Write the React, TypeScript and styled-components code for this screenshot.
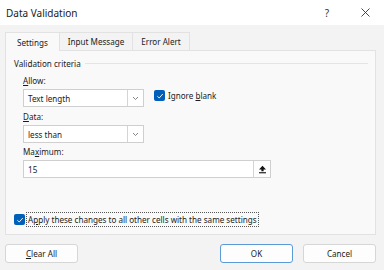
import styled, { createGlobalStyle } from "styled-components";

const GlobalStyle = createGlobalStyle`
  html, body {
    margin: 0;
    background: #f3f3f3;
    font-family: "Noto Sans", "Open Sans", sans-serif;
    color: #1b1b1b;
  }
`;

const Dialog = styled.div`
  width: 384px;
  height: 270px;
  display: flex;
  flex-direction: column;
  background: #f3f3f3;
  overflow: hidden;
  font-size: 8.1px;
`;

const TitleBar = styled.div`
  height: 25px;
  flex-shrink: 0;
  background: #ffffff;
  display: flex;
  align-items: center;
  padding-left: 6px;
`;

const Title = styled.span`
  flex: 1;
  font-size: 10px;
  color: #1a1a1a;
`;

const TitleButton = styled.div`
  width: 38px;
  height: 25px;
  display: flex;
  align-items: center;
  justify-content: center;
  color: #333;
  font-size: 10px;
`;

const Tabs = styled.div`
  display: flex;
  margin: 7px 0 0 5px;
  height: 18px;
  flex-shrink: 0;
`;

const Tab = styled.div<{ $active?: boolean }>`
  display: flex;
  align-items: center;
  padding: 0 ${(p) => (p.$active ? "11px" : "8px")};
  border: 1px solid #e2e2e2;
  border-bottom: none;
  margin-left: -1px;
  background: ${(p) => (p.$active ? "#f9f9f9" : "#f3f3f3")};
  position: relative;
  z-index: ${(p) => (p.$active ? 2 : 1)};
  margin-bottom: ${(p) => (p.$active ? "-1px" : "0")};
  &:first-child {
    margin-left: 0;
  }
`;

const Panel = styled.div`
  margin: 0 8px 0 5px;
  height: 185px;
  box-sizing: border-box;
  border: 1px solid #e2e2e2;
  background: #f9f9f9;
  display: flex;
  flex-direction: column;
  padding: 6px 7px 7px 8px;
`;

const Legend = styled.div`
  display: flex;
  align-items: center;
  gap: 4px;
  line-height: 13px;
`;

const LegendLine = styled.div`
  flex: 1;
  height: 1px;
  background: #e4e4e4;
`;

const Group = styled.div`
  margin-left: 9px;
  display: flex;
  flex-direction: column;
`;

const Label = styled.div<{ $top: number }>`
  line-height: 12px;
  margin-top: ${(p) => p.$top}px;
  margin-bottom: 2px;
`;

const Row = styled.div`
  display: flex;
  align-items: flex-start;
`;

const Select = styled.div`
  width: 121px;
  height: 18px;
  box-sizing: border-box;
  border: 1px solid #cfcfcf;
  background: #fff;
  display: flex;
  align-items: center;
  padding-left: 4px;
`;

const SelectText = styled.span`
  flex: 1;
`;

const Chevron = styled.div`
  width: 15px;
  height: 16px;
  border-left: 1px solid #d4d4d4;
  display: flex;
  align-items: center;
  justify-content: center;
`;

const Input = styled.div`
  width: 248px;
  height: 18px;
  box-sizing: border-box;
  border: 1px solid #cfcfcf;
  background: #fff;
  display: flex;
  align-items: center;
  padding-left: 4px;
`;

const RefButton = styled.div`
  width: 16px;
  height: 16px;
  border-left: 1px solid #d4d4d4;
  background: #fdfdfd;
  display: flex;
  align-items: center;
  justify-content: center;
`;

const Check = styled.div`
  width: 11px;
  height: 11px;
  border-radius: 2px;
  background: #005fb8;
  display: flex;
  align-items: center;
  justify-content: center;
  flex-shrink: 0;
`;

const CheckField = styled.div<{ $gap: number }>`
  display: flex;
  align-items: center;
  gap: ${(p) => p.$gap}px;
`;

const IgnoreBlank = styled(CheckField)`
  margin: 1px 0 0 10px;
`;

const ApplyRow = styled(CheckField)`
  margin-top: auto;
`;

const FocusText = styled.span`
  border: 1px dotted #555;
  padding: 0 1px;
  line-height: 13px;
`;

const Footer = styled.div`
  display: flex;
  padding: 9px 8px 0 5px;
`;

const Button = styled.div<{ $primary?: boolean }>`
  width: 73px;
  height: 19px;
  box-sizing: border-box;
  border: 1px solid ${(p) => (p.$primary ? "#5b9ad6" : "#d6d6d6")};
  border-radius: 3px;
  background: #fdfdfd;
  display: flex;
  align-items: center;
  justify-content: center;
`;

const Spacer = styled.div`
  flex: 1;
`;

const ButtonGap = styled.div`
  width: 10px;
`;

const U = styled.span`
  text-decoration: underline;
  text-underline-offset: 1px;
`;

const CheckMark = () => (
  <svg width="8" height="8" viewBox="0 0 8 8">
    <path d="M1.3 4.2 L3.2 6 L6.8 2" fill="none" stroke="#fff" strokeWidth="0.9" />
  </svg>
);

const ChevronDown = () => (
  <svg width="7" height="5" viewBox="0 0 7 5">
    <path d="M1 1 L3.5 3.5 L6 1" fill="none" stroke="#666" strokeWidth="0.8" />
  </svg>
);

const UploadIcon = () => (
  <svg width="9" height="9" viewBox="0 0 9 9">
    <path d="M4.5 0.8 L8 4.5 L5.6 4.5 L5.6 6.3 L3.4 6.3 L3.4 4.5 L1 4.5 Z" fill="#111" />
    <rect x="1" y="7.2" width="7" height="1.1" fill="#111" />
  </svg>
);

const CloseIcon = () => (
  <svg width="9" height="9" viewBox="0 0 9 9">
    <path d="M0.5 0.5 L8.5 8.5 M8.5 0.5 L0.5 8.5" stroke="#333" strokeWidth="0.9" />
  </svg>
);

export default function App() {
  return (
    <>
      <GlobalStyle />
      <Dialog>
        <TitleBar>
          <Title>Data Validation</Title>
          <TitleButton>?</TitleButton>
          <TitleButton>
            <CloseIcon />
          </TitleButton>
        </TitleBar>
        <Tabs>
          <Tab $active>Settings</Tab>
          <Tab>Input Message</Tab>
          <Tab>Error Alert</Tab>
        </Tabs>
        <Panel>
          <Legend>
            Validation criteria
            <LegendLine />
          </Legend>
          <Group>
            <Label $top={5}>
              <U>A</U>llow:
            </Label>
            <Row>
              <Select>
                <SelectText>Text length</SelectText>
                <Chevron>
                  <ChevronDown />
                </Chevron>
              </Select>
              <IgnoreBlank $gap={3}>
                <Check>
                  <CheckMark />
                </Check>
                <span>
                  Ignore <U>b</U>lank
                </span>
              </IgnoreBlank>
            </Row>
            <Label $top={4}>
              <U>D</U>ata:
            </Label>
            <Select>
              <SelectText>less than</SelectText>
              <Chevron>
                <ChevronDown />
              </Chevron>
            </Select>
            <Label $top={3}>
              Ma<U>x</U>imum:
            </Label>
            <Input>
              <SelectText>15</SelectText>
              <RefButton>
                <UploadIcon />
              </RefButton>
            </Input>
          </Group>
          <ApplyRow $gap={1}>
            <Check>
              <CheckMark />
            </Check>
            <FocusText>
              A<U>p</U>ply these changes to all other cells with the same settings
            </FocusText>
          </ApplyRow>
        </Panel>
        <Footer>
          <Button>
            <span>
              <U>C</U>lear All
            </span>
          </Button>
          <Spacer />
          <Button $primary>OK</Button>
          <ButtonGap />
          <Button>Cancel</Button>
        </Footer>
      </Dialog>
    </>
  );
}
